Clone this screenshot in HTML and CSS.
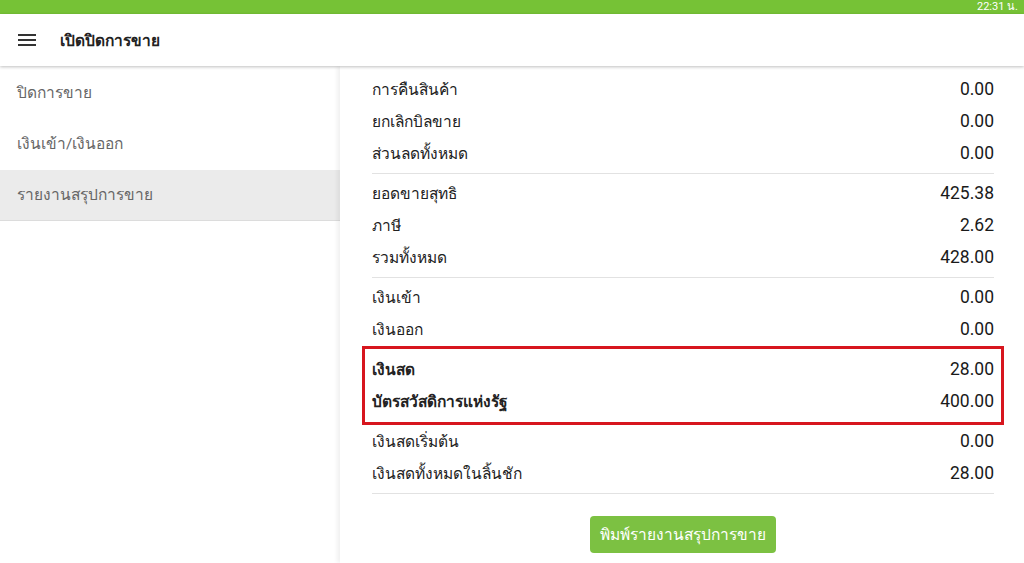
FILE: index.html
```html
<!DOCTYPE html>
<html lang="th">
<head>
  <meta charset="utf-8">
  <title>เปิดปิดการขาย</title>
  <link rel="stylesheet" href="styles.css">
</head>
<body>
  <div class="statusbar">22:31 น.</div>
  <div class="appbar">
    <svg class="menu" width="18" height="12" viewBox="0 0 18 12">
      <rect x="0" y="0" width="18" height="2" fill="#333"/>
      <rect x="0" y="5" width="18" height="2" fill="#333"/>
      <rect x="0" y="10" width="18" height="2" fill="#333"/>
    </svg>
    <div class="apptitle">เปิดปิดการขาย</div>
  </div>
  <div class="main">
    <div class="sidebar">
      <div class="navitem">ปิดการขาย</div>
      <div class="navitem">เงินเข้า/เงินออก</div>
      <div class="navitem active">รายงานสรุปการขาย</div>
    </div>
    <div class="content">
      <div class="group">
        <div class="row"><span>การคืนสินค้า</span><span>0.00</span></div>
        <div class="row"><span>ยกเลิกบิลขาย</span><span>0.00</span></div>
        <div class="row"><span>ส่วนลดทั้งหมด</span><span>0.00</span></div>
      </div>
      <div class="group">
        <div class="row"><span>ยอดขายสุทธิ</span><span>425.38</span></div>
        <div class="row"><span>ภาษี</span><span>2.62</span></div>
        <div class="row"><span>รวมทั้งหมด</span><span>428.00</span></div>
      </div>
      <div class="group">
        <div class="row"><span>เงินเข้า</span><span>0.00</span></div>
        <div class="row"><span>เงินออก</span><span>0.00</span></div>
        <div class="highlight">
          <div class="row bold"><span>เงินสด</span><span>28.00</span></div>
          <div class="row bold"><span>บัตรสวัสดิการแห่งรัฐ</span><span>400.00</span></div>
        </div>
        <div class="row"><span>เงินสดเริ่มต้น</span><span>0.00</span></div>
        <div class="row"><span>เงินสดทั้งหมดในลิ้นชัก</span><span>28.00</span></div>
      </div>
      <div class="actions">
        <button class="printbtn">พิมพ์รายงานสรุปการขาย</button>
      </div>
    </div>
  </div>
</body>
</html>
```

FILE: styles.css
```css
body {
  margin: 0;
  font-family: Roboto, "Noto Sans", "DejaVu Sans", sans-serif;
  background-color: white;
  color: #222;
  height: 563px;
  overflow: hidden;
}

.statusbar {
  height: 14px;
  background-color: #76c236;
  color: white;
  font-size: 11px;
  line-height: 14px;
  text-align: right;
  padding-right: 6px;
}

.appbar {
  height: 52px;
  display: flex;
  align-items: center;
  background-color: white;
  box-shadow: 0 1px 3px rgba(0, 0, 0, 0.25);
  position: relative;
  z-index: 2;
}

.menu {
  margin-left: 18px;
  margin-right: 24px;
}

.apptitle {
  font-size: 15.5px;
  font-weight: bold;
  color: #222;
}

.main {
  display: flex;
  height: 497px;
}

.sidebar {
  width: 340px;
  padding-top: 2px;
  background-color: white;
}

.navitem {
  height: 51px;
  line-height: 51px;
  padding-left: 17px;
  font-size: 15.5px;
  color: #666;
}

.navitem.active {
  background-color: #ebebeb;
  border-bottom: 1px solid #dcdcdc;
  height: 50px;
}

.content {
  flex: 1;
  padding: 7px 30px 0 32px;
  box-shadow: -3px 0 4px rgba(0, 0, 0, 0.06);
}

.group {
  border-bottom: 1px solid #e2e2e2;
  padding-bottom: 4px;
  margin-bottom: 3px;
}

.row {
  display: flex;
  justify-content: space-between;
  align-items: center;
  height: 32px;
  font-size: 15.5px;
  color: #222;
}

.row span:last-child {
  font-size: 17.5px;
  color: #1a1a1a;
}

.row.bold span:first-child {
  font-weight: bold;
}

.highlight {
  border: 3px solid #d7161e;
  margin: 1px -10px 0 -10px;
  padding: 4px 7px 5px 7px;
}

.actions {
  display: flex;
  justify-content: center;
  padding-top: 19px;
}

.printbtn {
  background-color: #7cc142;
  color: white;
  border: none;
  border-radius: 4px;
  font-family: inherit;
  font-size: 15.5px;
  width: 186px;
  height: 37px;
}
```
